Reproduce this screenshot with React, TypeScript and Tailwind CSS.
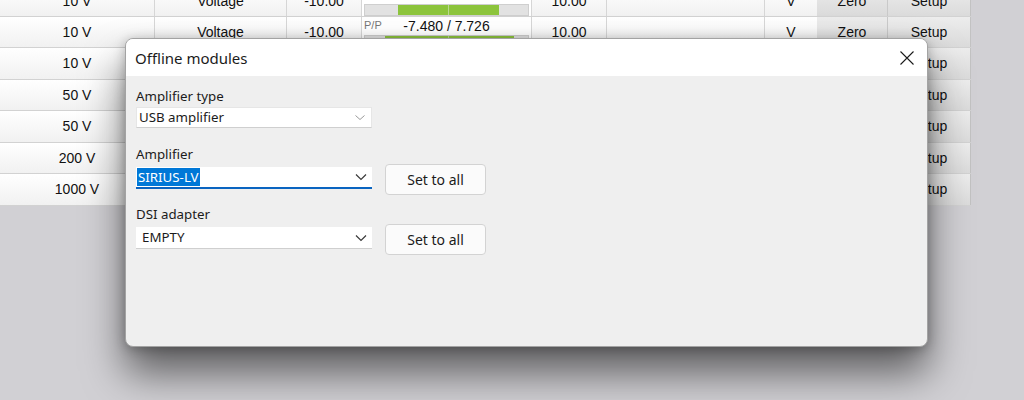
import React from "react";

const cols = [155, 132, 75, 170, 75, 158, 52, 71, 83];

const rows = [
  { range: "10 V", h: 31 },
  { range: "10 V", h: 31 },
  { range: "10 V", h: 32 },
  { range: "50 V", h: 31 },
  { range: "50 V", h: 32 },
  { range: "200 V", h: 31 },
  { range: "1000 V", h: 32 },
];

function Meter({ idx }: { idx: number }) {
  const bars = [
    { l: 33, w: 101 },
    { l: 20, w: 129 },
  ];
  const b = bars[idx] ?? { l: 30, w: 100 };
  return (
    <div className="flex h-full w-full flex-col">
      <div className="relative flex h-[19px] items-center justify-center">
        <span className="absolute left-[2px] top-[2px] text-[11px] leading-[12px] text-[#777]">P/P</span>
        <span className="text-[14px] leading-[16px] text-[#111]">-7.480 / 7.726</span>
      </div>
      <div className="relative mx-[2px] h-[12px] border border-[#cfcfcf] bg-[#e2e2e2]">
        <div className="absolute top-0 h-full bg-[#8cc43c]" style={{ left: b.l, width: b.w }} />
        <div className="absolute left-[83px] top-0 h-full w-px bg-[#b9d98f]" />
      </div>
    </div>
  );
}

function Row({ r, i }: { r: { range: string; h: number }; i: number }) {
  const cell =
    "flex items-center justify-center border-r border-[#d6d6d6] bg-gradient-to-b from-white to-[#f1f1f1]";
  return (
    <div className="flex border-b border-[#d2d2d2]" style={{ height: r.h }}>
      <div className={cell} style={{ width: cols[0] }}>{r.range}</div>
      <div className={cell} style={{ width: cols[1] }}>Voltage</div>
      <div className={cell} style={{ width: cols[2] }}>-10.00</div>
      <div className="border-r border-[#d6d6d6] bg-white" style={{ width: cols[3] }}>
        <Meter idx={i} />
      </div>
      <div className={cell} style={{ width: cols[4] }}>10.00</div>
      <div className={cell} style={{ width: cols[5] }}></div>
      <div className="flex items-center justify-center bg-gradient-to-b from-white to-[#f1f1f1]" style={{ width: cols[6] }}>V</div>
      <div
        className="flex items-center justify-center border-r border-[#c9c9c9] bg-gradient-to-b from-[#ececec] to-[#dadada]"
        style={{ width: cols[7] }}
      >
        Zero
      </div>
      <div
        className="flex items-center justify-center border-r border-[#c2c2c2] bg-gradient-to-b from-[#ededed] to-[#dbdbdb]"
        style={{ width: cols[8] }}
      >
        Setup
      </div>
    </div>
  );
}

function Chevron({ light }: { light?: boolean }) {
  return (
    <svg width="12" height="8" viewBox="0 0 12 8" className="mr-[5px]">
      <path
        d={light ? "M1.5 1.5 L6 5.5 L10.5 1.5" : "M1 1.5 L6 6.5 L11 1.5"}
        fill="none"
        stroke={light ? "#9a9a9a" : "#3a3a3a"}
        strokeWidth={light ? 1 : 1.2}
      />
    </svg>
  );
}

function SetToAll() {
  return (
    <button className="h-[31px] w-[101px] rounded-[4px] border border-[#d3d3d3] bg-[#fbfbfb] text-[14px] text-[#1b1b1b]">
      Set to all
    </button>
  );
}

export default function App() {
  return (
    <div className="relative h-[400px] w-[1024px] overflow-hidden bg-[#d1d0d4] font-['Liberation_Sans',Arial,sans-serif] text-[14px] text-[#111]">
      <div className="-mt-[14px] w-[971px]">
        {rows.map((r, i) => (
          <Row key={i} r={r} i={i} />
        ))}
      </div>

      <div className="absolute left-[125px] top-[38px] flex h-[309px] w-[803px] flex-col overflow-hidden rounded-[8px] border border-[#a3a3a3] bg-[#efefef] font-['Noto_Sans',sans-serif] text-[#1b1b1b] shadow-[0_26px_40px_rgba(0,0,0,0.55),0_2px_12px_rgba(0,0,0,0.25)]">
        <div className="flex h-[37px] items-center justify-between bg-white pl-[9px] pr-[13px]">
          <span className="text-[15px] leading-[20px]">Offline modules</span>
          <svg width="14" height="14" viewBox="0 0 14 14">
            <path d="M0.5 0.5 L13.5 13.5 M13.5 0.5 L0.5 13.5" stroke="#1b1b1b" strokeWidth="1.1" />
          </svg>
        </div>
        <div className="flex flex-col px-[10px] pt-[10px] text-[13.3px]">
          <div className="h-[20px] leading-[20px]">Amplifier type</div>
          <div className="mt-[1px] flex h-[21px] w-[236px] items-center justify-between border border-[#e6e6e6] border-b-[#cfcfcf] bg-white pl-[2px]">
            <span>USB amplifier</span>
            <Chevron light />
          </div>

          <div className="mt-[16px] h-[20px] leading-[20px]">Amplifier</div>
          <div className="flex items-start gap-[13px]">
            <div className="mt-[3px] flex h-[22px] w-[236px] items-center justify-between border-b-2 border-[#0a64c0] bg-white pl-[1px]">
              <span className="bg-[#0078d7] px-[1px] leading-[18px] text-white">SIRIUS-LV</span>
              <Chevron />
            </div>
            <SetToAll />
          </div>

          <div className="mt-[9px] h-[20px] leading-[20px]">DSI adapter</div>
          <div className="flex items-start gap-[13px]">
            <div className="mt-[3px] flex h-[22px] w-[236px] items-center justify-between border-b border-[#cfcfcf] bg-white pl-[6px]">
              <span>EMPTY</span>
              <Chevron />
            </div>
            <SetToAll />
          </div>
        </div>
      </div>
    </div>
  );
}
